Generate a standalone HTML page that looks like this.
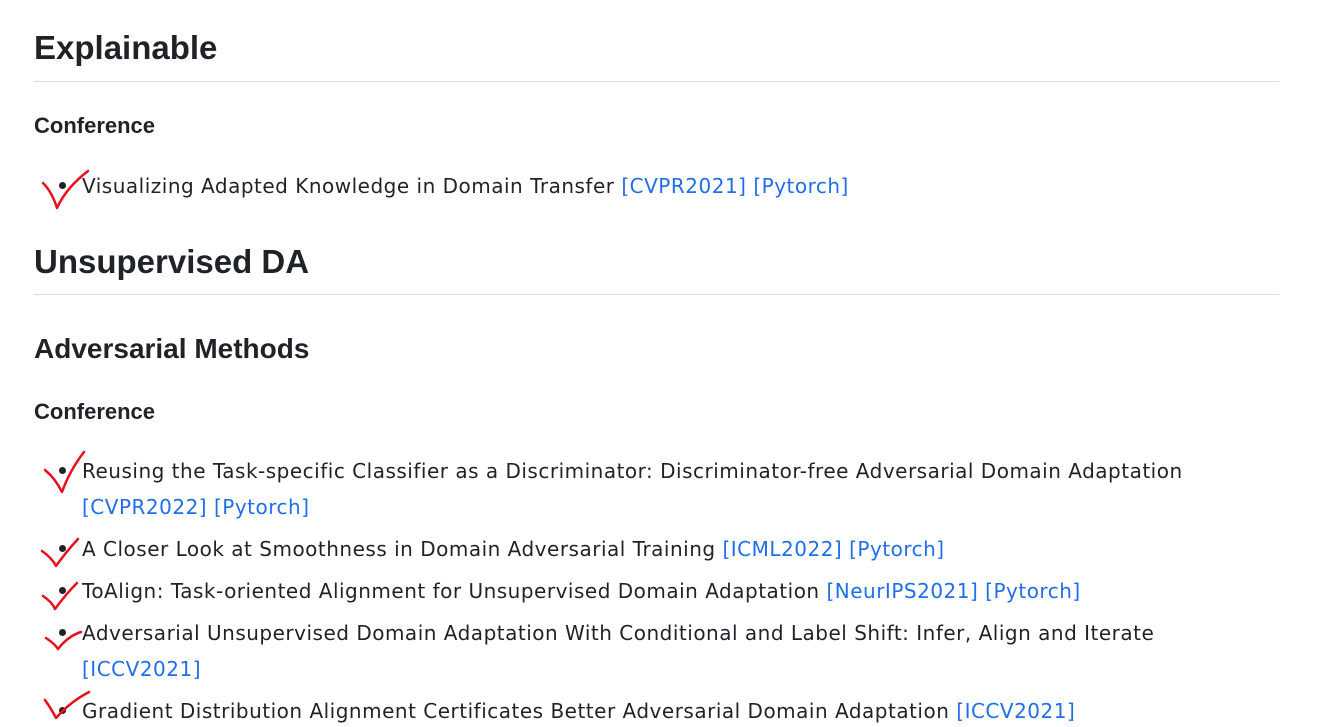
<!DOCTYPE html>
<html><head><style>
body{margin:0;width:1318px;height:727px;overflow:hidden;background:#fff;font-family:"Liberation Sans",sans-serif;color:#1f2328;position:relative}
.a{position:absolute;white-space:nowrap}
.h1{font-size:33px;font-weight:600;left:34px}
.h3{font-size:28px;font-weight:600;left:34px}
.h4{font-size:22px;font-weight:700;left:34px}
.t{font-family:"DejaVu Sans",sans-serif;font-size:20px;left:82px;letter-spacing:0.5px}
.l{color:#1f6feb}
.hr{position:absolute;left:34px;width:1245px;height:1px;background:#d8dee4}
.b{position:absolute;width:7px;height:7px;border-radius:50%;background:#1f2328;left:59px}
svg{position:absolute;left:0;top:0}
</style></head><body>
<div class="a h1" style="top:29px">Explainable</div>
<div class="hr" style="top:81px"></div>
<div class="a h4" style="top:113px">Conference</div>
<div class="b" style="top:182px"></div>
<div class="a t" style="top:174px">Visualizing Adapted Knowledge in Domain Transfer <span class="l">[CVPR2021] [Pytorch]</span></div>
<div class="a h1" style="top:243px">Unsupervised DA</div>
<div class="hr" style="top:294px"></div>
<div class="a h3" style="top:333px">Adversarial Methods</div>
<div class="a h4" style="top:399px">Conference</div>
<div class="b" style="top:467px"></div>
<div class="a t" style="top:459px">Reusing the Task-specific Classifier as a Discriminator: Discriminator-free Adversarial Domain Adaptation</div>
<div class="a t l" style="top:495px">[CVPR2022] [Pytorch]</div>
<div class="b" style="top:545px"></div>
<div class="a t" style="top:537px">A Closer Look at Smoothness in Domain Adversarial Training <span class="l">[ICML2022] [Pytorch]</span></div>
<div class="b" style="top:587px"></div>
<div class="a t" style="top:579px">ToAlign: Task-oriented Alignment for Unsupervised Domain Adaptation <span class="l">[NeurIPS2021] [Pytorch]</span></div>
<div class="b" style="top:629px"></div>
<div class="a t" style="top:621px">Adversarial Unsupervised Domain Adaptation With Conditional and Label Shift: Infer, Align and Iterate</div>
<div class="a t l" style="top:657px">[ICCV2021]</div>
<div class="b" style="top:707px"></div>
<div class="a t" style="top:699px">Gradient Distribution Alignment Certificates Better Adversarial Domain Adaptation <span class="l">[ICCV2021]</span></div>
<svg width="1318" height="727" fill="none" stroke="#e8101c" stroke-width="2.5" stroke-linecap="round" stroke-linejoin="round">
<path d="M43 183 Q52 192 57 208 Q66 188 88 171"/>
<path d="M45 470 Q55 478 62 492 Q70 470 84 452"/>
<path d="M42 551 Q52 558 56 566 Q66 552 78 539"/>
<path d="M43 596 Q52 602 55 609 Q66 594 77 583"/>
<path d="M46 638 Q55 644 58 649 Q68 636 81 632"/>
<path d="M45 700 Q52 710 56 718 Q70 702 89 692"/>
</svg>
</body></html>
